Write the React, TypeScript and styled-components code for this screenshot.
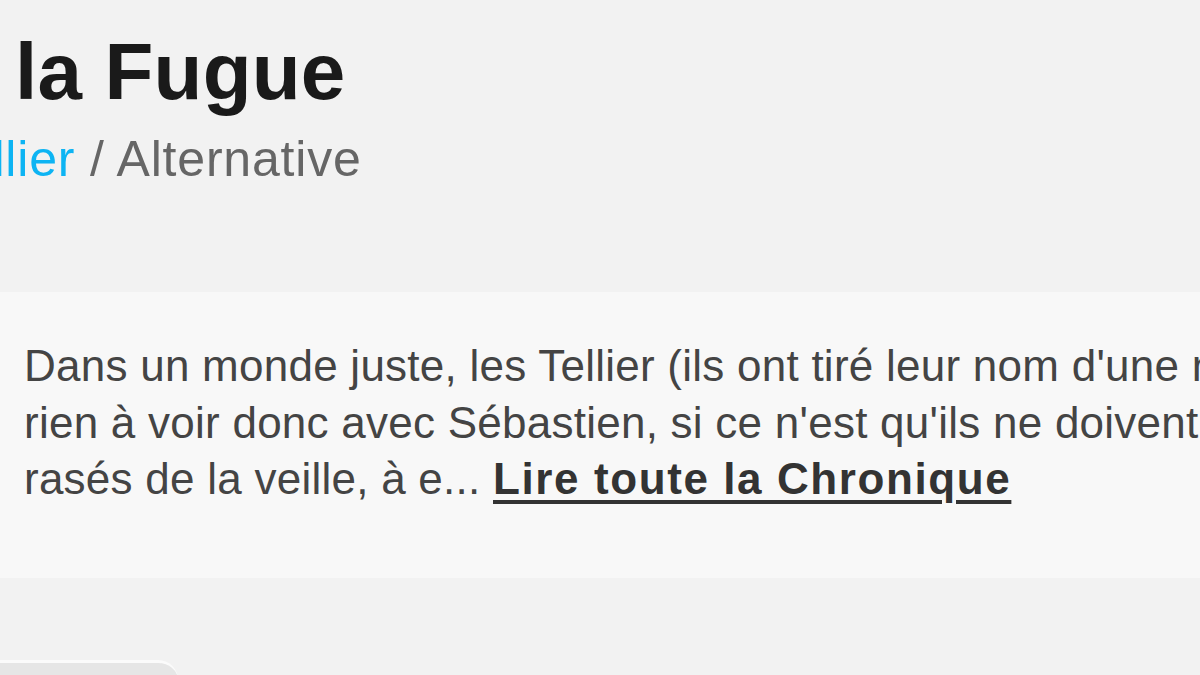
import React from 'react';
import styled, { createGlobalStyle } from 'styled-components';

const GlobalStyle = createGlobalStyle`
  html, body {
    margin: 0;
    padding: 0;
    background: #f2f2f2;
    overflow: hidden;
  }
  body {
    font-family: "Liberation Sans", Arial, sans-serif;
  }
`;

const Page = styled.div`
  width: 1200px;
  height: 675px;
  overflow: hidden;
  display: flex;
  flex-direction: column;
`;

const Header = styled.header`
  display: flex;
  flex-direction: column;
  padding: 31px 0 0 15px;
`;

const Title = styled.h1`
  margin: 0;
  font-size: 80px;
  line-height: 82px;
  font-weight: 700;
  color: #1a1a1a;
  letter-spacing: 0.2px;
  white-space: nowrap;
`;

const Subtitle = styled.div`
  margin: 18px 0 0 -76px;
  font-size: 50px;
  line-height: 56px;
  letter-spacing: 0.8px;
  color: #666;
  white-space: nowrap;
`;

const ArtistLink = styled.a`
  color: #0db4f3;
  text-decoration: none;
`;

const Review = styled.section`
  margin: 105px -40px 0 -40px;
  padding: 46px 40px 70px 64px;
  background: #f8f8f8;
`;

const ReviewText = styled.p`
  margin: 0;
  font-size: 44px;
  line-height: 56.5px;
  letter-spacing: 0.25px;
  color: #444;
  white-space: nowrap;
`;

const ReadMore = styled.a`
  color: #333;
  font-weight: 700;
  letter-spacing: 1.6px;
  text-decoration: underline;
  text-decoration-thickness: 4px;
  text-underline-offset: 6px;
`;

const Footer = styled.div`
  margin-top: 82px;
  display: flex;
`;

const Tab = styled.div`
  width: 198px;
  height: 20px;
  margin-left: -20px;
  box-sizing: border-box;
  background: #e6e6e6;
  border-top: 3px solid #fbfbfb;
  border-top-right-radius: 34px;
`;

export default function App() {
  return (
    <Page>
      <GlobalStyle />
      <Header>
        <Title>la Fugue</Title>
        <Subtitle>
          <ArtistLink href="#">Tellier</ArtistLink> / Alternative
        </Subtitle>
      </Header>
      <Review>
        <ReviewText>
          Dans un monde juste, les Tellier (ils ont tiré leur nom d'une note
          <br />
          rien à voir donc avec Sébastien, si ce n'est qu'ils ne doivent pas
          <br />
          rasés de la veille, à e... <ReadMore href="#">Lire toute la Chronique</ReadMore>
        </ReviewText>
      </Review>
      <Footer>
        <Tab />
      </Footer>
    </Page>
  );
}
